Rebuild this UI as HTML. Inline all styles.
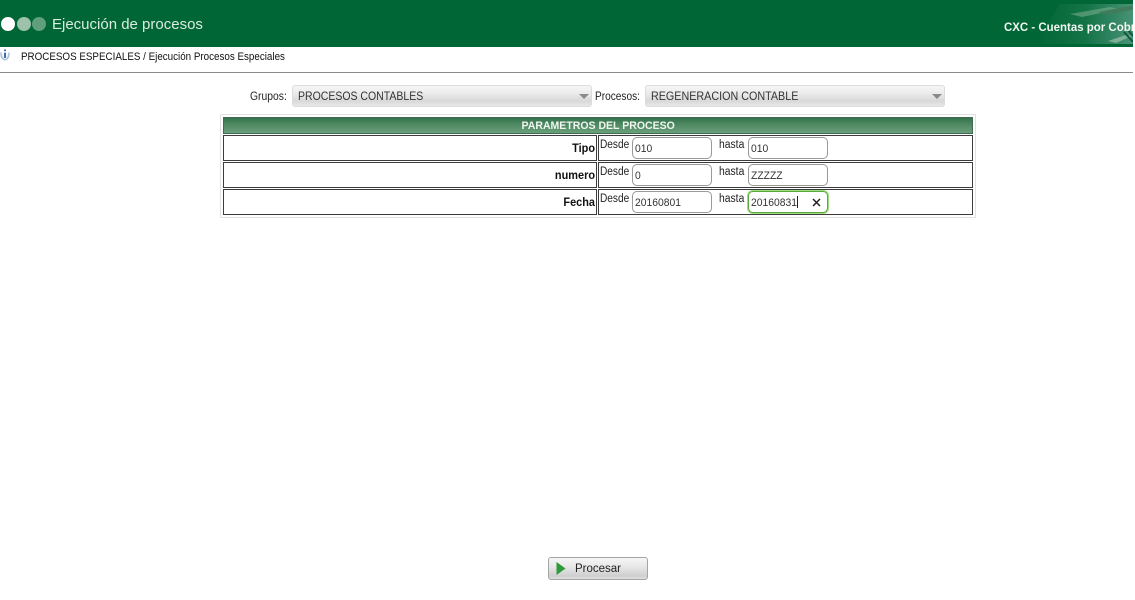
<!DOCTYPE html>
<html lang="es"><head><meta charset="utf-8"><title>Ejecución de procesos</title>
<style>
html,body{margin:0;padding:0;background:#fff;width:1135px;height:600px;overflow:hidden}
body{position:relative;font-family:"Liberation Sans",sans-serif;font-size:11.5px;color:#111}
.a{position:absolute;white-space:nowrap}
.hdr{left:0;top:0;width:1133px;height:47px;background:#016635;overflow:hidden}
.dot{width:14px;height:14px;border-radius:50%;top:17px}
.sel{height:22px;box-sizing:border-box;border:1px solid #dcdcdc;border-radius:3px;background:linear-gradient(#f6f6f6,#ececec 35%,#d8d8d8 75%,#e8e8e8);font-size:12px;line-height:21px;padding-left:5px;color:#333}
.sel span{display:inline-block;transform-origin:left center}
.arr{width:0;height:0;border-left:5px solid transparent;border-right:5px solid transparent;border-top:5px solid #8a8a8a}
.box{box-sizing:border-box;border:1px solid #3c3c3c;background:#fff}
.inp{box-sizing:border-box;width:80px;height:22px;border:1px solid #999;border-radius:5px;background:#fff;font-size:11px;line-height:23px;padding-left:2px;color:#333}
.inp span{display:inline-block;transform-origin:left center;transform:scaleX(.94)}
.lbl{font-size:11.5px;line-height:14px;color:#222;transform-origin:left center}
.d{transform:scaleX(.88)}
.h{transform:scaleX(.9)}
.b{font-weight:bold;font-size:11.5px;line-height:14px;text-align:right;color:#111;left:500px;width:95px;transform-origin:right center;transform:scaleX(.95)}
</style></head><body>
<div class="a hdr">
  <svg class="a" style="left:1020px;top:0" width="115" height="47" viewBox="0 0 115 47">
    <defs>
      <linearGradient id="g" x1="0" x2="1" y1="0" y2="0"><stop offset="0" stop-color="#016635"/><stop offset="0.5" stop-color="#137346"/><stop offset="1" stop-color="#4a9478"/></linearGradient>
    </defs>
    <polygon points="15,44 40,4 115,4 115,44" fill="url(#g)"/>
    <path d="M50 14 L90 7 L100 9 L62 17Z" fill="#7fae90" opacity=".55"/>
    <path d="M78 12 L115 5 L115 9 L88 15Z" fill="#3f7d5c"/>
    <path d="M88 41 L106 35 L112 36 L96 43Z" fill="#9cc0a6" opacity=".7"/>
    <path d="M104 32 L113 42 M108 30 L113 36" stroke="#0f5a3c" stroke-width="2"/>
  </svg>
  <div class="a dot" style="left:1px;background:#fff"></div>
  <div class="a dot" style="left:17px;background:#9cc2ab"></div>
  <div class="a dot" style="left:32px;background:#5f9f7c"></div>
  <div class="a" style="left:52px;top:16px;font-size:15px;line-height:18px;color:#d9ecdf">Ejecución de procesos</div>
  <div class="a" style="left:1004px;top:19px;font-size:12px;line-height:16px;font-weight:bold;color:#f2f7f2;transform-origin:left center;transform:scaleX(.955)">CXC - Cuentas por Cobrar</div>
</div>
<svg class="a" style="left:0;top:48px" width="11" height="13" viewBox="0 0 11 13">
  <path d="M5 12C1.5 11 .8 8 1 4.5 M9 4.5C9.2 8 8 11 5 12" stroke="#a9c3dc" stroke-width="1.5" fill="#dbe7f2"/>
  <path d="M5 1.5v1.6M5 4.6v5.4" stroke="#2b5f9e" stroke-width="1.8"/>
</svg>
<div class="a" style="left:21px;top:51px;line-height:13px;font-size:11.2px;color:#111;transform-origin:left center;transform:scaleX(.877)">PROCESOS ESPECIALES / Ejecución Procesos Especiales</div>
<div class="a" style="left:0;top:72px;width:1133px;height:1px;background:#8a8a8a"></div>

<div class="a lbl" style="left:250px;top:90px;transform:scaleX(.9)">Grupos:</div>
<div class="a sel" style="left:292px;top:85px;width:300px"><span style="transform:scaleX(.875)">PROCESOS CONTABLES</span></div>
<div class="a arr" style="left:579px;top:94px"></div>
<div class="a lbl" style="left:595px;top:90px;transform:scaleX(.88)">Procesos:</div>
<div class="a sel" style="left:645px;top:85px;width:300px"><span style="transform:scaleX(.896)">REGENERACION CONTABLE</span></div>
<div class="a arr" style="left:932px;top:94px"></div>

<div class="a" style="left:220px;top:114px;width:756px;height:104px;box-sizing:border-box;border:1px solid #e2e2e2"></div>
<div class="a" style="left:223px;top:117px;width:750px;height:17px;box-sizing:border-box;border:1px solid #3f6b50;background:linear-gradient(#35734d,#4f8a63 45%,#6a9f7c);color:#f0f5f0;font-weight:bold;font-size:11px;line-height:17px;text-align:center"><span style="display:inline-block;transform:scaleX(.956)">PARAMETROS DEL PROCESO</span></div>

<div class="a box" style="left:223px;top:135px;width:374px;height:26px"></div>
<div class="a box" style="left:598px;top:135px;width:375px;height:26px"></div>
<div class="a box" style="left:223px;top:162px;width:374px;height:26px"></div>
<div class="a box" style="left:598px;top:162px;width:375px;height:26px"></div>
<div class="a box" style="left:223px;top:189px;width:374px;height:26px"></div>
<div class="a box" style="left:598px;top:189px;width:375px;height:26px"></div>

<div class="a b" style="top:142px">Tipo</div>
<div class="a b" style="top:169px">numero</div>
<div class="a b" style="top:196px">Fecha</div>

<div class="a lbl d" style="left:600px;top:138px">Desde</div>
<div class="a inp" style="left:632px;top:137px"><span>010</span></div>
<div class="a lbl h" style="left:719px;top:138px">hasta</div>
<div class="a inp" style="left:748px;top:137px"><span>010</span></div>

<div class="a lbl d" style="left:600px;top:165px">Desde</div>
<div class="a inp" style="left:632px;top:164px"><span>0</span></div>
<div class="a lbl h" style="left:719px;top:165px">hasta</div>
<div class="a inp" style="left:748px;top:164px"><span>ZZZZZ</span></div>

<div class="a lbl d" style="left:600px;top:192px">Desde</div>
<div class="a inp" style="left:632px;top:191px"><span>20160801</span></div>
<div class="a lbl h" style="left:719px;top:192px">hasta</div>
<div class="a inp" style="left:748px;top:191px;border:1px solid #5aa83c;box-shadow:0 0 0 1px #9ede7e"><span>20160831</span></div>
<div class="a" style="left:797px;top:196px;width:1px;height:12px;background:#222"></div>
<svg class="a" style="left:812px;top:198px" width="9" height="9" viewBox="0 0 9 9"><path d="M1 1L8 8M8 1L1 8" stroke="#222" stroke-width="1.5"/></svg>

<div class="a" style="left:548px;top:557px;width:100px;height:23px;box-sizing:border-box;border:1px solid #a5a5a5;border-radius:3px;background:linear-gradient(#f6f6f6,#e8e8e8 40%,#cfcfcf 85%,#dedede);font-size:11.5px;line-height:22px;padding-left:26px;color:#222">Procesar</div>
<svg class="a" style="left:555px;top:561px" width="12" height="15" viewBox="0 0 12 15"><path d="M1.5 1L10.5 7.5L1.5 14Z" fill="#2f9a3a"/></svg>
</body></html>
